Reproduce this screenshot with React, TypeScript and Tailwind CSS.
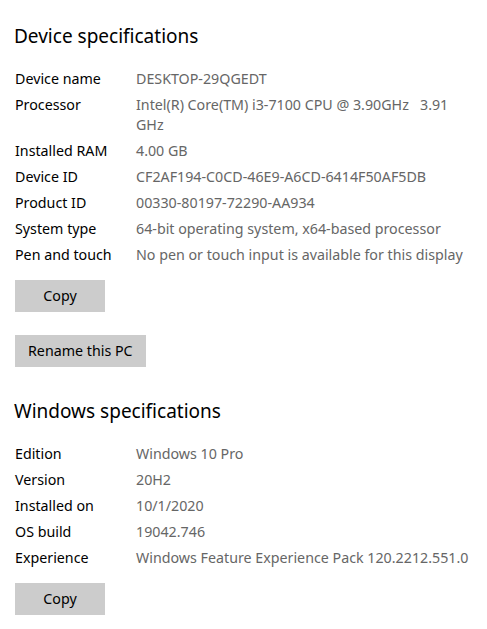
const deviceSpecs: [string, string][] = [
  ["Device name", "DESKTOP-29QGEDT"],
  ["Processor", "Intel(R) Core(TM) i3-7100 CPU @ 3.90GHz\u00a0\u00a0 3.91 GHz"],
  ["Installed RAM", "4.00 GB"],
  ["Device ID", "CF2AF194-C0CD-46E9-A6CD-6414F50AF5DB"],
  ["Product ID", "00330-80197-72290-AA934"],
  ["System type", "64-bit operating system, x64-based processor"],
  ["Pen and touch", "No pen or touch input is available for this display"],
];

const windowsSpecs: [string, string][] = [
  ["Edition", "Windows 10 Pro"],
  ["Version", "20H2"],
  ["Installed on", "10/1/2020"],
  ["OS build", "19042.746"],
  ["Experience", "Windows Feature Experience Pack 120.2212.551.0"],
];

function SpecList({ rows }: { rows: [string, string][] }) {
  return (
    <dl className="mt-[19px] flex flex-col gap-[6px]">
      {rows.map(([label, value]) => (
        <div key={label} className="flex text-[14.25px] leading-5">
          <dt className="w-[121px] shrink-0 text-black">{label}</dt>
          <dd className="max-w-[334px] text-[#666666]">{value}</dd>
        </div>
      ))}
    </dl>
  );
}

function Button({ children, className = "" }: { children: string; className?: string }) {
  return (
    <button
      className={`h-8 bg-[#cccccc] px-[13px] text-[14.25px] text-black ${className}`}
    >
      {children}
    </button>
  );
}

export default function App() {
  return (
    <div
      className="min-h-screen bg-white pl-[15px] pt-[22px]"
      style={{ fontFamily: '"Noto Sans", "Open Sans", sans-serif' }}
    >
      <h2 className="-ml-px text-[19px] leading-7 text-black">Device specifications</h2>
      <SpecList rows={deviceSpecs} />
      <div className="mt-[15px]">
        <Button className="w-[90px]">Copy</Button>
      </div>
      <div className="mt-[23px]">
        <Button>Rename this PC</Button>
      </div>

      <h2 className="-ml-px mt-[30px] text-[19px] leading-7 text-black">Windows specifications</h2>
      <SpecList rows={windowsSpecs} />
      <div className="mt-[15px]">
        <Button className="w-[90px]">Copy</Button>
      </div>
    </div>
  );
}
